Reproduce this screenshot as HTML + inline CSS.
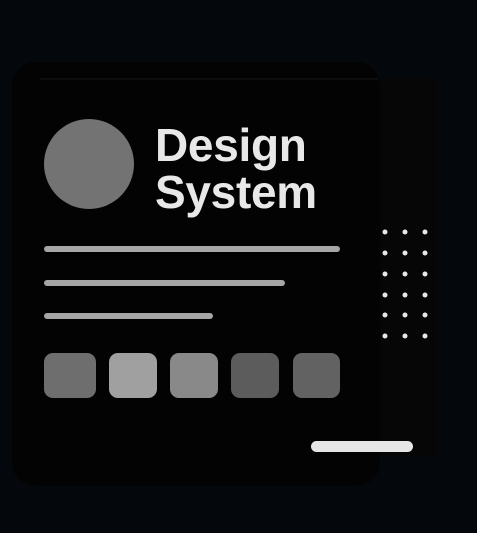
<!DOCTYPE html>
<html><head><style>
body{margin:0;width:477px;height:533px;background:#04070b;position:relative;overflow:hidden;font-family:"Liberation Sans",sans-serif}
div{position:absolute}
.l{background:#a6a6a6;border-radius:3px;height:6px;left:44px}
.s{top:353px;height:45px;border-radius:9px}
</style></head><body>
<div style="left:378px;top:78px;width:60px;height:378px;background:#060606"></div>
<div style="left:12px;top:62px;width:368px;height:424px;background:#030303;border-radius:24px"></div>
<div style="left:40px;top:78px;width:338px;height:2px;background:#0d0d0d"></div>
<div style="left:44px;top:119px;width:90px;height:90px;border-radius:50%;background:#737373"></div>
<div style="left:155px;top:122px;color:#e8e8e8;font-weight:bold;font-size:46px;line-height:47px;letter-spacing:-0.3px">Design<br>System</div>
<div class="l" style="top:246px;width:296px"></div>
<div class="l" style="top:280px;width:241px"></div>
<div class="l" style="top:313px;width:169px"></div>
<div class="s" style="left:44px;width:52px;background:#6e6e6e"></div>
<div class="s" style="left:109px;width:48px;background:#a0a0a0"></div>
<div class="s" style="left:170px;width:48px;background:#898989"></div>
<div class="s" style="left:231px;width:48px;background:#5c5c5c"></div>
<div class="s" style="left:293px;width:47px;background:#626262"></div>
<div style="left:311px;top:441px;width:102px;height:11px;border-radius:6px;background:#e6e6e6"></div>
<svg style="position:absolute;left:0;top:0" width="477" height="533" fill="#e8e8e8">
<g>
<circle cx="385" cy="232" r="2.5"/><circle cx="405" cy="232" r="2.5"/><circle cx="425" cy="232" r="2.5"/>
<circle cx="385" cy="253" r="2.5"/><circle cx="405" cy="253" r="2.5"/><circle cx="425" cy="253" r="2.5"/>
<circle cx="385" cy="274" r="2.5"/><circle cx="405" cy="274" r="2.5"/><circle cx="425" cy="274" r="2.5"/>
<circle cx="385" cy="295" r="2.5"/><circle cx="405" cy="295" r="2.5"/><circle cx="425" cy="295" r="2.5"/>
<circle cx="385" cy="315" r="2.5"/><circle cx="405" cy="315" r="2.5"/><circle cx="425" cy="315" r="2.5"/>
<circle cx="385" cy="336" r="2.5"/><circle cx="405" cy="336" r="2.5"/><circle cx="425" cy="336" r="2.5"/>
</g></svg>
</body></html>
